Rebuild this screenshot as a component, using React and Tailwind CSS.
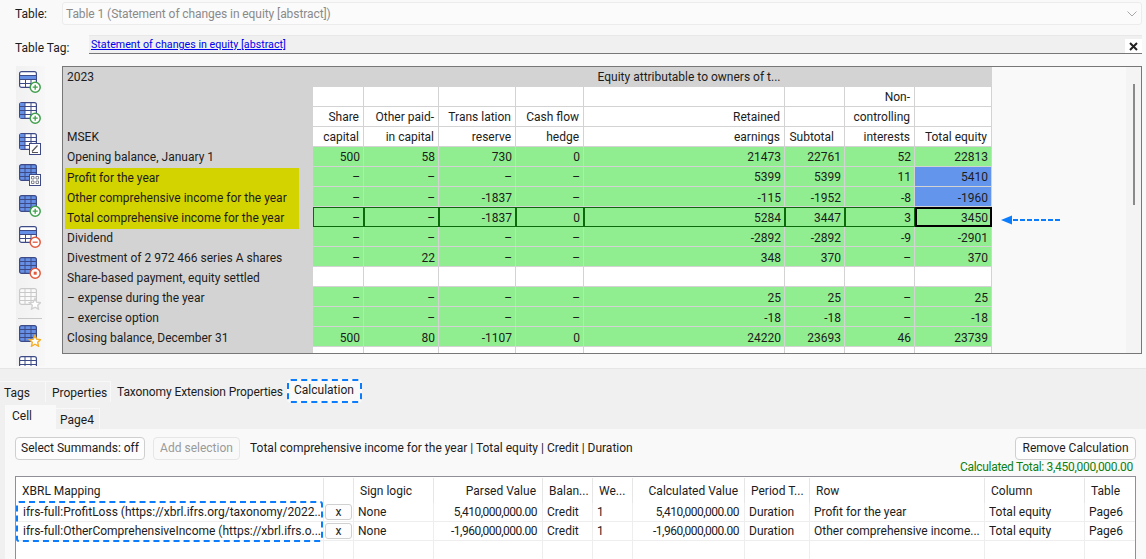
import React from 'react';

const uiFont = '[font-family:Roboto,sans-serif]';

const labelCol = 'grid grid-rows-[20px] grid-cols-[250px_51px_75px_77px_68px_201px_60px_70px_77px]';

// filas de la hoja: l = texto, v = valores, tipo = estilo
const rows = [
  { l: 'Opening balance, January 1', v: ['500', '58', '730', '0', '21473', '22761', '52', '22813'] },
  { l: 'Profit for the year', y: 1, v: ['–', '–', '–', '–', '5399', '5399', '11', '5410'], blue: 1 },
  { l: 'Other comprehensive income for the year', y: 1, v: ['–', '–', '-1837', '–', '-115', '-1952', '-8', '-1960'], blue: 1, low: 1 },
  { l: 'Total comprehensive income for the year', y: 2, total: 1, v: ['–', '–', '-1837', '0', '5284', '3447', '3', '3450'] },
  { l: 'Dividend', low: 1, v: ['–', '–', '–', '–', '-2892', '-2892', '-9', '-2901'] },
  { l: 'Divestment of 2 972 466 series A shares', low: 1, v: ['–', '22', '–', '–', '348', '370', '–', '370'] },
  { l: 'Share-based payment, equity settled', low: 1, empty: 1, v: ['', '', '', '', '', '', '', ''] },
  { l: '– expense during the year', low: 1, v: ['–', '–', '–', '–', '25', '25', '–', '25'] },
  { l: '– exercise option', low: 1, v: ['–', '–', '–', '–', '-18', '-18', '–', '-18'] },
  { l: 'Closing balance, December 31', low: 1, v: ['500', '80', '-1107', '0', '24220', '23693', '46', '23739'] },
  { l: '', empty: 1, v: ['', '', '', '', '', '', '', ''] },
];

const headRows = [
  ['', '', '', '', '', '', 'Non-', ''],
  ['Share', 'Other paid-', 'Trans lation', 'Cash flow', 'Retained', '', 'controlling', ''],
  ['capital', 'in capital', 'reserve', 'hedge', 'earnings', 'Subtotal', 'interests', 'Total equity'],
];

const TableIcon = ({ fill, badge, muted }) => {
  const line = muted ? '#c9c9c9' : '#3d4a86';
  const blue = muted ? '#f2f2f2' : '#6590e6';
  const cell = muted ? '#fafafa' : '#ffffff';
  return (
    <svg width="22" height="22" viewBox="0 0 22 22" className="block shrink-0">
      <rect x="0.6" y="0.6" width="16.8" height="15.8" rx="2" fill={fill === 'all' ? blue : cell} stroke={line} strokeWidth="1.2" />
      {fill === 'row' && <rect x="1" y="4.5" width="16" height="4" fill={blue} />}
      {fill === 'col' && <rect x="1" y="1" width="5" height="15" fill={blue} />}
      {fill === 'row' ? (
        <path d="M1 4.5H17M1 8.5H17M1 12.5H17M6.5 8.5V16M12 8.5V16" stroke={line} strokeWidth="1" fill="none" />
      ) : (
        <path d="M1 4.5H17M1 8.5H17M1 12.5H17M6 1V16M12 1V16" stroke={line} strokeWidth="1" fill="none" />
      )}
      {badge === 'plus' && (
        <g>
          <circle cx="16.2" cy="16.2" r="5" fill="#fff" stroke="#3f9f4c" strokeWidth="1.5" />
          <path d="M13.7 16.2H18.7M16.2 13.7V18.7" stroke="#3f9f4c" strokeWidth="1.3" />
        </g>
      )}
      {badge === 'minus' && (
        <g>
          <circle cx="16.2" cy="16.2" r="5" fill="#fff" stroke="#e2593b" strokeWidth="1.5" />
          <path d="M13.7 16.2H18.7" stroke="#e2593b" strokeWidth="1.3" />
        </g>
      )}
      {badge === 'x' && (
        <g>
          <circle cx="16.2" cy="16.2" r="5" fill="#fff" stroke="#e2593b" strokeWidth="1.5" />
          <rect x="14.7" y="14.7" width="3" height="3" fill="#e2593b" />
        </g>
      )}
      {badge === 'edit' && (
        <g>
          <rect x="10.5" y="10.5" width="11" height="11" fill="#fff" stroke={line} />
          <path d="M13 18.5L18.5 12.5M13 19.5H19" stroke="#555" strokeWidth="1.2" fill="none" />
        </g>
      )}
      {badge === 'cells' && (
        <g>
          <rect x="10.5" y="10.5" width="11" height="11" fill="#fff" stroke={line} />
          <path d="M12.5 12.5h2.5v2.5h-2.5zM17 12.5h2.5v2.5H17zM12.5 17h2.5v2.5h-2.5zM17 17h2.5v2.5H17z" fill="none" stroke="#667" strokeWidth="0.8" />
        </g>
      )}
      {badge === 'star' && (
        <path
          d="M16 10.5L17.7 14.2L21.5 14.7L18.7 17.3L19.5 21.2L16 19.2L12.5 21.2L13.3 17.3L10.5 14.7L14.3 14.2Z"
          fill="#fff"
          stroke={muted ? '#d0d0d0' : '#f5ae2b'}
          strokeWidth="1.4"
        />
      )}
    </svg>
  );
};

const Toolbar = () => (
  <div className="flex flex-col w-[29px] h-[300px] overflow-hidden pt-[5px] pl-[3px] bg-gradient-to-r from-[#f1f1f1] to-[#f7f7f7]">
    <div className="flex flex-col gap-[9px]">
      <TableIcon fill="row" badge="plus" />
      <TableIcon fill="col" badge="plus" />
      <TableIcon fill="col" badge="edit" />
      <TableIcon fill="all" badge="cells" />
      <TableIcon fill="all" badge="plus" />
      <TableIcon fill="row" badge="minus" />
      <TableIcon fill="all" badge="x" />
      <TableIcon fill="none" badge="star" muted />
    </div>
    <div className="h-px bg-[#c8c8c8] -ml-[1px] w-[24px] mt-[8px] mb-[6px] shrink-0" />
    <div className="flex flex-col gap-[9px]">
      <TableIcon fill="all" badge="star" />
      <TableIcon fill="none" />
    </div>
  </div>
);

const Sheet = () => (
  <div className="relative flex w-[1080px] h-[288px] border border-[#777777] overflow-hidden text-[12px] leading-[20px] text-[#1c1c1c]">
    <div className="w-[1063px] shrink-0">
      <div className="w-[929px] bg-[#d3d3d3]">
        <div className={labelCol}>
          <div className="pl-[4px]">2023</div>
          <div className="col-span-8 text-center pl-[73px]">Equity attributable to owners of t...</div>
        </div>
        {headRows.map((r, i) => (
          <div key={i} className={`${labelCol} leading-[21px]`}>
            <div className="pl-[4px]">{i === 2 ? 'MSEK' : ''}</div>
            {r.map((t, j) => (
              <div key={j} className={`bg-white border-r border-b border-[#d3d3d3] text-right whitespace-nowrap ${t === 'Subtotal' ? 'pr-[10px]' : 'pr-[4px]'}`}>
                {t}
              </div>
            ))}
          </div>
        ))}
        {rows.map((r, i) => (
          <div key={i} className={`${labelCol} ${r.low ? 'leading-[23px]' : 'leading-[21px]'}`}>
            {r.y ? (
              <div className={`relative ml-[2px] mr-[14px] pl-[2px] bg-[#d3d300] whitespace-nowrap ${r.y === 2 ? 'h-[22px] leading-[23px]' : 'h-[20px]'} ${i === 1 ? 'mt-px' : ''}`}>
                {r.l}
              </div>
            ) : (
              <div className="pl-[4px] whitespace-nowrap">{r.l}</div>
            )}
            {r.v.map((t, j) => {
              const last = j === 7;
              let cls = 'bg-[#90ee90] border-r border-b border-[#d3d3d3]';
              if (r.empty) cls = 'bg-white border-r border-b border-[#d3d3d3]';
              if (r.blue && last) cls = 'bg-[#6495ed] border-r border-b border-[#d3d3d3]';
              if (r.total) cls = last ? 'bg-[#90ee90] border-2 border-black leading-[18px]' : 'bg-[#90ee90] border border-[#0b6b0b] leading-[20px]';
              return (
                <div key={j} className={`${cls} text-right ${r.total && last ? 'pr-[2px]' : 'pr-[3px]'}`}>
                  {t}
                </div>
              );
            })}
          </div>
        ))}
      </div>
    </div>
    <div className="w-[16px] bg-[#f4f4f4] pt-[17px] pl-[7px]">
      <div className="w-[2px] h-[121px] bg-[#8a8a8a]" />
    </div>
    <svg width="60" height="10" viewBox="0 0 60 10" className="absolute left-[938px] top-[148px]">
      <path d="M0 5L11 0.5V9.5Z" fill="#0b7dfc" />
      <path d="M12 5H60" stroke="#0b7dfc" strokeWidth="2.2" strokeDasharray="5 2" />
    </svg>
  </div>
);

const columns = 'grid grid-cols-[308px_30px_80px_109px_50px_40px_112px_65px_175px_100px_56px]';

const calcRows = [
  ['ifrs-full:ProfitLoss (https://xbrl.ifrs.org/taxonomy/2022...', 'None', '5,410,000,000.00', 'Credit', '1', '5,410,000,000.00', 'Duration', 'Profit for the year', 'Total equity', 'Page6'],
  ['ifrs-full:OtherComprehensiveIncome (https://xbrl.ifrs.o...', 'None', '-1,960,000,000.00', 'Credit', '1', '-1,960,000,000.00', 'Duration', 'Other comprehensive income...', 'Total equity', 'Page6'],
];

const headers = ['XBRL Mapping', '', 'Sign logic', 'Parsed Value', 'Balan...', 'We...', 'Calculated Value', 'Period T...', 'Row', 'Column', 'Table'];
const isRight = (i) => i === 3 || i === 6;

const CalcTable = () => (
  <div className="relative mx-[10px] border border-b-0 border-[#8f8f96] bg-white h-[85px] overflow-hidden text-[12px] text-[#1c1c1c]">
    <div className={`${columns} h-[26px] leading-[26px]`}>
      {headers.map((h, i) => (
        <div key={i} className={`mt-[1px] h-[25px] border-r border-[#e6e6e6] whitespace-nowrap ${isRight(i) ? 'text-right pr-[6px]' : 'pl-[6px]'}`}>
          {h}
        </div>
      ))}
    </div>
    {calcRows.map((r, i) => (
      <div key={i} className={`${columns} h-[19px] leading-[18px] border-b border-[#eeeeee]`}>
        <div className="pl-[7px] whitespace-nowrap border-r border-[#eeeeee]">{r[0]}</div>
        <div className="border-r border-[#eeeeee] pl-[1px] pt-px">
          <div className="w-[27px] h-[16px] leading-[14px] border border-[#d0d0d0] rounded-[3px] bg-[#fdfdfd] text-center">x</div>
        </div>
        {r.slice(1).map((t, j) => (
          <div key={j} className={`border-r border-[#eeeeee] whitespace-nowrap ${isRight(j + 2) ? 'text-right pr-[5px] tracking-[-0.5px]' : 'pl-[4px]'}`}>
            {t}
          </div>
        ))}
      </div>
    ))}
    <div className={`${columns} h-[19px] border-b border-[#eeeeee]`}>
      {headers.map((h, i) => (
        <div key={i} className="border-r border-[#eeeeee]" />
      ))}
    </div>
    <div className="absolute left-0 top-[24px] w-[307px] h-[41px] border-2 border-dashed border-[#0b7dfc] rounded-[3px]" />
  </div>
);

const BottomTabs = () => (
  <div className="flex h-[33px] pt-[12px] items-start text-[12px] text-[#1c1c1c]">
    <div className="w-[46px] h-[21px] leading-[22px] pl-[4px] border-r border-t border-[#f8f8f8]">Tags</div>
    <div className="w-[65px] h-[21px] leading-[22px] pl-[6px] border-r border-t border-[#f8f8f8]">Properties</div>
    <div className="w-[176px] h-[21px] leading-[22px] pl-[6px] whitespace-nowrap tracking-[-0.1px]">Taxonomy Extension Properties</div>
    <div className="-mt-[2px] w-[75px] h-[24px] leading-[18px] pl-[5px] border-2 border-dashed border-[#0b7dfc] rounded-[4px] bg-[#f9f9f9]">Calculation</div>
  </div>
);

export default function App() {
  return (
    <div className={`${uiFont} w-[1146px] h-[559px] overflow-hidden bg-[#f0f0f0] text-[12px] text-[#1c1c1c]`}>
      <div className="h-[369px] bg-[#f9f9f9] border-b border-[#e6e6e6] pt-[2px] pr-[4px]">
        <div className="flex items-center h-[23px]">
          <div className="w-[62px] pl-[15px]">Table:</div>
          <div className="flex-1 h-[23px] flex items-center justify-between pl-[3px] pr-[3px] bg-[#fbfbfb] border border-[#ececec] rounded-[3px] text-[#8a8a8a]">
            <span className="tracking-[-0.08px]">Table 1 (Statement of changes in equity [abstract])</span>
            <svg width="10" height="6" viewBox="0 0 10 6" className="mr-[1px]">
              <path d="M0.5 0.5L5 5L9.5 0.5" fill="none" stroke="#a8a8a8" />
            </svg>
          </div>
        </div>
        <div className="flex mt-[10px] h-[19px]">
          <div className="w-[89px] pl-[15px] pt-[3px] leading-[20px] whitespace-nowrap">Table Tag:</div>
          <div className="relative flex-1 h-[19px] bg-[#f0f0f0] border-t border-[#e8e8e8] border-b border-b-[#777777] pl-[2px] leading-[17px] text-[10.7px] text-[#0000ee]">
            <span className="underline">Statement of changes in equity [abstract]</span>
            <div className="absolute right-0 bottom-0 w-[17px] h-[14px] bg-white flex items-center justify-center">
              <svg width="9" height="9" viewBox="0 0 9 9">
                <path d="M1 1L8 8M8 1L1 8" stroke="#222" strokeWidth="2" />
              </svg>
            </div>
          </div>
        </div>
        <div className="flex mt-[12px] pl-[16px]">
          <Toolbar />
          <div className="ml-[17px]">
            <Sheet />
          </div>
        </div>
      </div>
      <BottomTabs />
      <div className="flex mt-[3px] pl-[5px] h-[24px] items-end text-[12px]">
        <div className="w-[51px] h-[24px] leading-[22px] pl-[7px] bg-[#f9f9f9]">Cell</div>
        <div className="w-[44px] h-[21px] leading-[22px] pl-[4px] border-t border-r border-[#f8f8f8]">Page4</div>
      </div>
      <div className="ml-[5px] h-[131px] bg-[#f9f9f9]">
        <div className="flex h-[47px] pt-[8px] pl-[10px] pr-[10px] items-start">
          <div className="w-[130px] h-[23px] leading-[21px] text-center border border-[#cfcfcf] rounded-[4px] bg-[#fdfdfd]">Select Summands: off</div>
          <div className="ml-[8px] w-[87px] h-[23px] leading-[21px] text-center border border-[#e6e6e6] rounded-[4px] text-[#9a9a9a]">Add selection</div>
          <div className="ml-[10px] leading-[23px] flex-1 whitespace-nowrap">Total comprehensive income for the year | Total equity | Credit | Duration</div>
          <div className="flex flex-col items-end">
            <div className="w-[121px] h-[23px] leading-[21px] text-center border border-[#cfcfcf] rounded-[4px] bg-[#fdfdfd]">Remove Calculation</div>
            <div className="pr-[3px] leading-[15px] text-[#0f7f0f] whitespace-nowrap tracking-[-0.3px]">Calculated Total: 3,450,000,000.00</div>
          </div>
        </div>
        <CalcTable />
      </div>
    </div>
  );
}
